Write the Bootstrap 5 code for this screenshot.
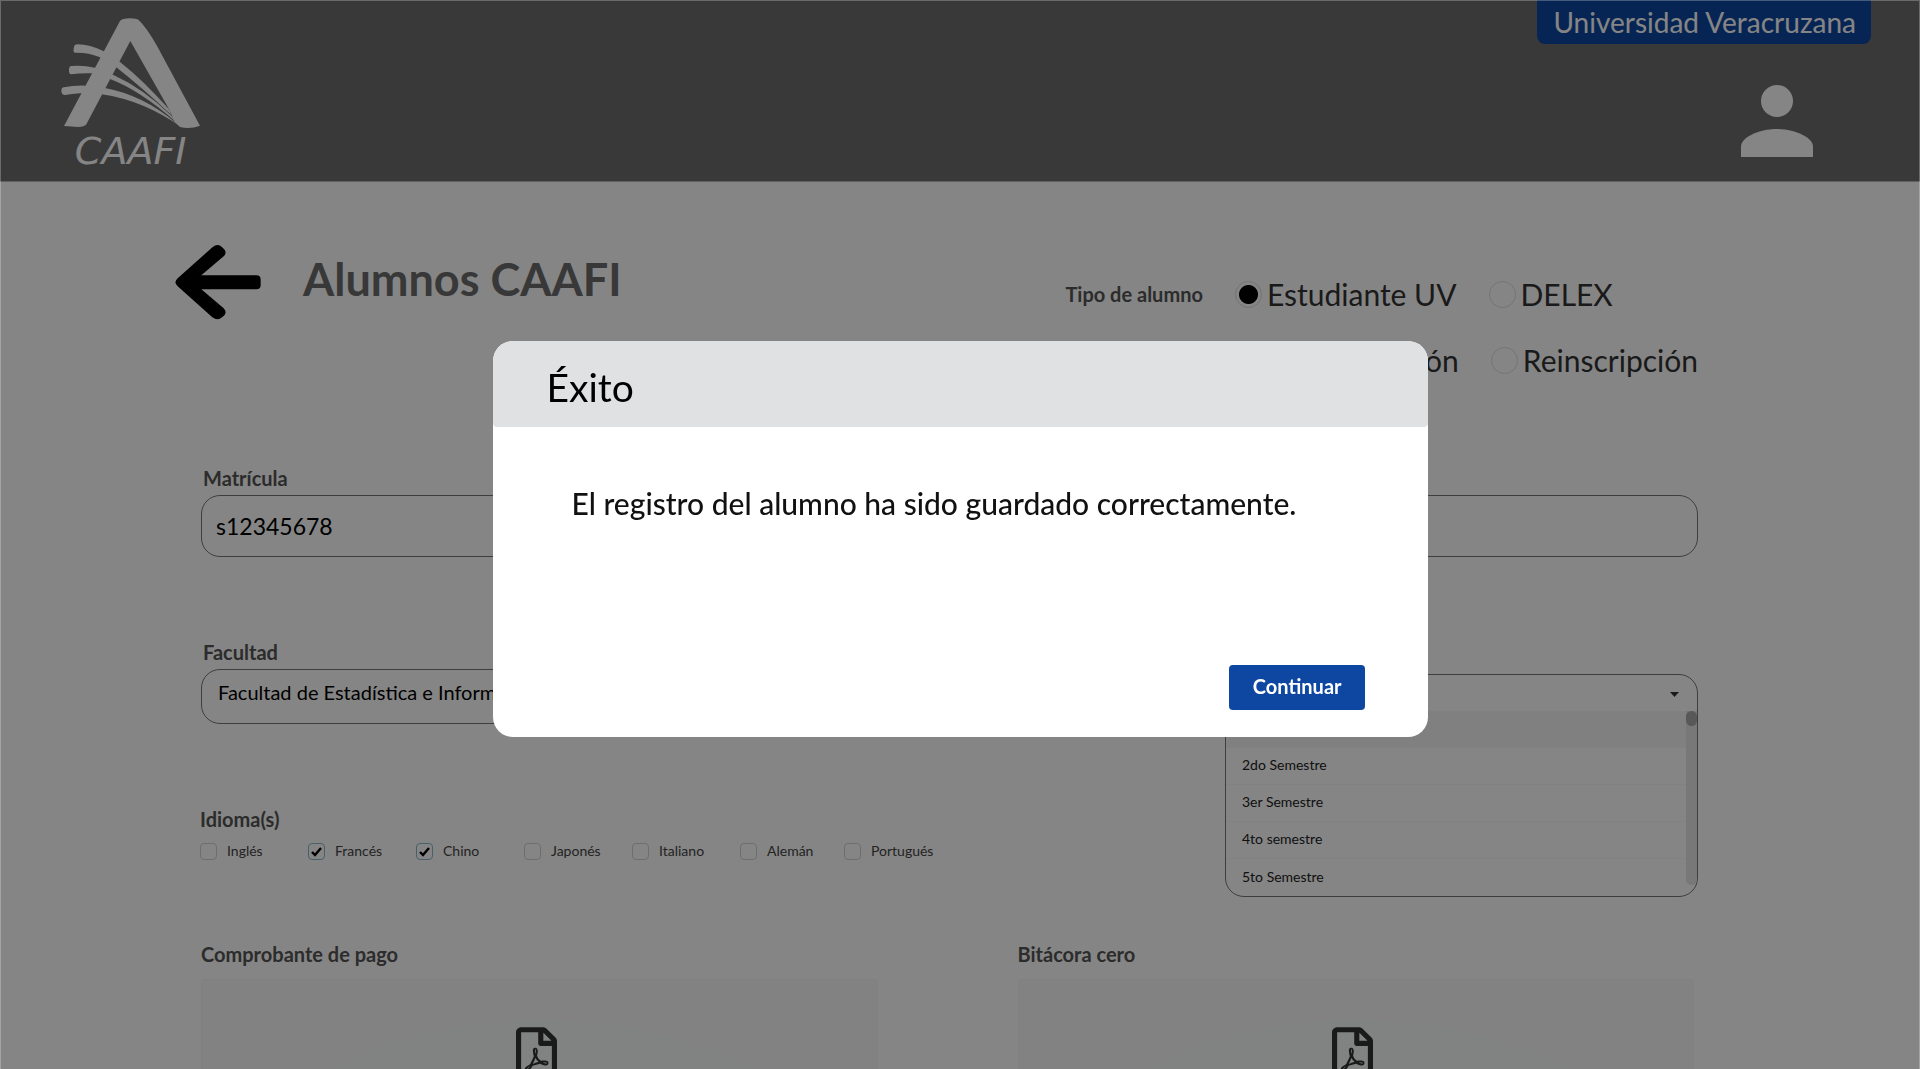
<!DOCTYPE html>
<html lang="es">
<head>
<meta charset="utf-8">
<meta name="viewport" content="width=device-width, initial-scale=1">
<title>Alumnos CAAFI</title>
<link href="https://cdn.jsdelivr.net/npm/bootstrap@5.3.0/dist/css/bootstrap.min.css" rel="stylesheet">
<style>
  body { font-family: Lato, "Open Sans", sans-serif; color: #333; line-height: 1.2; }
  .site-header { background: #6e6e6e; height: 182px; border-bottom: 1px solid #b8b8b8; padding: 0 49px 0 60px; }
  .brand { margin-top: 17px; }
  .brand svg { display: block; width: 142px; height: 160px; }
  .brand text { font: italic 114px "DejaVu Sans", sans-serif; }
  .uni-tag { background: #0d47a1; color: #fff; font-size: 28px; line-height: 44px; border-radius: 0 0 8px 8px; padding: 0 15px 0 16px; }
  .user-btn { margin: 41px 58px 0 0; }
  .user-btn svg, .back-btn svg { display: block; }
  .page-main { padding: 63px 222px 0 201px; }
  .title-row { margin-left: -26px; margin-bottom: 88px; }
  .page-title { font-size: 45px; font-weight: 700; line-height: 68px; color: #6b6b6b; margin: 0 0 0 42px; }
  .type-col { padding-top: 31px; gap: 30px; }
  .type-line { height: 36px; gap: 32px; }
  .type-line label { font-size: 30px; line-height: 36px; }
  .field-label { display: block; font-size: 20px; font-weight: 700; line-height: 24px; color: #555; margin: 0 0 5px 2px; padding: 0; }
  .type-line .field-label { margin: 0; }
  .type-line .wide-label { width: 187px; }
  .radio-dot { appearance: none; width: 27px; height: 27px; margin: 0 5px 0 0; border: 1px solid #dedede; border-radius: 50%; }
  .radio-dot:checked { background: radial-gradient(circle, #000 9px, transparent 10px); }
  .box-field.form-control, .box-field.form-select { border: 1px solid #777; border-radius: 19px; color: #000; background-image: none; }
  .matricula.form-control { height: 62px; font-size: 23px; padding: 0 14px; }
  .facultad.form-select { height: 55px; font-size: 20px; padding: 0 16px 9px; }
  .block-gap { margin-top: 83px; }
  .sem-col { width: 473px; margin-left: 100px; padding-top: 5px; }
  .sem-box { border: 1px solid #777; border-radius: 19px; overflow: hidden; height: 223px; }
  .sem-select.form-select { border: 0; height: 36px; font-size: 14px; padding: 0 14px; background: transparent; border-radius: 0; }
  .caret { width: 9px; height: 5px; background: #333; clip-path: polygon(0 0, 100% 0, 50% 100%); right: 18px; top: 17px; }
  .sem-list { font-size: 14px; }
  .sem-list .list-group-item { height: 37px; line-height: 34px; padding: 0 16px 2px; border: 0; border-bottom: 1px solid #fafafa; color: #222; background: transparent; }
  .sem-list .list-group-item.chosen { background: #f6f6f6; }
  .sem-track { width: 11px; height: 174px; background: #e6e6e6; border-radius: 0 0 6px 6px; }
  .sem-thumb { height: 15px; border-radius: 8px; background: #aaa; }
  .field-label.lang-label { margin: 83px 0 10px -1px; }
  .lang-row { margin-left: -1px; }
  .lang-row label { font-size: 14px; line-height: 20px; width: 108px; color: #444; }
  .lang-row label.narrow { width: 104px; }
  .tick-box { appearance: none; width: 17px; height: 17px; margin: 0 10px 0 0; border: 1px solid #d4d4d4; border-radius: 4px; background: center / 13px no-repeat; }
  .tick-box:checked { border-color: #8ab9c9; background-image: url("data:image/svg+xml,%3Csvg xmlns='http://www.w3.org/2000/svg' viewBox='0 0 13 13'%3E%3Cpath d='M2 7l3 3 6-7' fill='none' stroke='black' stroke-width='2.4'/%3E%3C/svg%3E"); }
  .upload-row { margin-top: 45px; gap: 140px; padding-right: 4px; }
  .upload-row section { flex: 1 1 0; }
  .upload-row .field-label { margin: 0 0 13px; }
  .drop-zone { height: 240px; border: 1px solid #f6f6f6; border-radius: 4px; padding: 47px 6px 0 0; background: radial-gradient(ellipse 300px 170px at 50% 210px, #f7fbfa 99%, #f9f9f9 100%); }
  .shade { position: fixed; inset: 0; background: rgba(0,0,0,.48); border: 1px solid rgba(255,255,255,.25); border-bottom: 0; z-index: 1050; }
  .notice { padding-top: 8px; }
  .notice .modal-dialog { max-width: 935px; }
  .notice .modal-content { border: 0; border-radius: 20px; color: #111; overflow: hidden; }
  .notice .modal-header { background: #e0e1e3; border: 0; border-radius: 20px 20px 4px 4px; padding: 22px 54px 16px; }
  .notice .modal-title { font-size: 39px; line-height: 48px; font-weight: 400; color: #000; }
  .notice .modal-body { padding: 57px 79px 0; min-height: 238px; font-size: 30px; line-height: 38px; font-weight: 500; }
  .notice .modal-footer { border: 0; padding: 0 63px 27px; }
  .continue-btn.btn { background: #0d47a1; color: #fff; font-size: 20px; font-weight: 700; line-height: 24px; border: 0; border-radius: 4px; margin: 0; padding: 9px 23px 12px 24px; }
</style>
</head>
<body class="vh-100 overflow-hidden">
<header class="site-header d-flex justify-content-between align-items-start">
  <a class="brand" href="#" aria-label="CAAFI">
    <svg viewBox="180 50 426 480" fill="#fff">
      <path d="M360 62Q366 54 390 54Q410 54 416 59Q440 82 470 135L600 376Q570 388 540 380L524 365L508 328L391 122L259 372Q252 380 235 380L192 377Z"/>
      <path d="M221 145Q222 132 232 132Q270 133 310 152L360 185Q430 240 507 327L514 344Q430 265 348 200L298 170Q265 156 226 157Q219 157 221 145Z"/>
      <path d="M207 208Q207 197 214 197Q250 194 284 202L342 225Q430 265 515 347L527 364Q420 270 330 236L274 219Q240 218 214 222Q206 220 207 208Z"/>
      <path d="M184 272Q184 262 192 261Q220 255 256 256L318 264Q430 285 528 368L545 381Q430 300 305 282L240 279Q215 281 195 284Q185 284 184 272Z"/>
      <text x="392" y="490" text-anchor="middle">CAAFI</text>
    </svg>
  </a>
  <div class="d-flex flex-column align-items-end">
    <div class="uni-tag">Universidad Veracruzana</div>
    <button class="user-btn btn p-0 border-0" type="button" aria-label="Usuario">
      <svg width="72" height="72" viewBox="723 255 216 216" fill="#fff"><circle cx="831" cy="303" r="48"/><path d="M723 471V440C723 413 775 387 831 387S939 413 939 440V471Z"/></svg>
    </button>
  </div>
</header>

<main class="page-main">
  <div class="title-row d-flex justify-content-between align-items-start">
    <div class="d-flex">
      <button class="back-btn btn p-0 border-0" type="button" aria-label="Regresar">
        <svg width="86" height="75" viewBox="76 74 258 225"><path d="M77 186Q78 180 84 174L188 81Q202 70 213 77L223 86Q233 97 222 108L155 165H320Q333 165 333 178V194Q333 207 320 207H155L222 264Q233 275 223 286L213 294Q202 301 188 291L84 198Q78 192 77 186Z"/></svg>
      </button>
      <h1 class="page-title">Alumnos CAAFI</h1>
    </div>
    <div class="type-col d-flex flex-column">
      <div class="type-line d-flex align-items-center">
        <span class="field-label">Tipo de alumno</span>
        <label class="d-flex align-items-center"><input class="radio-dot" type="radio" name="tipo" checked>Estudiante UV</label>
        <label class="d-flex align-items-center"><input class="radio-dot" type="radio" name="tipo">DELEX</label>
      </div>
      <div class="type-line d-flex align-items-center justify-content-end">
        <span class="field-label wide-label">Tipo de inscripción</span>
        <label class="d-flex align-items-center"><input class="radio-dot" type="radio" name="insc">Inscripción</label>
        <label class="d-flex align-items-center"><input class="radio-dot" type="radio" name="insc">Reinscripción</label>
      </div>
    </div>
  </div>

  <label class="field-label" for="matricula">Matrícula</label>
  <input class="matricula box-field form-control" id="matricula" type="text" value="s12345678">

  <div class="block-gap d-flex align-items-start">
    <div class="flex-grow-1">
      <label class="field-label" for="facultad">Facultad</label>
      <select class="facultad box-field form-select" id="facultad"><option>Facultad de Estadística e Informática</option></select>
      <div class="field-label lang-label">Idioma(s)</div>
      <div class="lang-row d-flex">
        <label class="d-flex align-items-center"><input class="tick-box" type="checkbox">Inglés</label>
        <label class="d-flex align-items-center"><input class="tick-box" type="checkbox" checked>Francés</label>
        <label class="d-flex align-items-center"><input class="tick-box" type="checkbox" checked>Chino</label>
        <label class="d-flex align-items-center"><input class="tick-box" type="checkbox">Japonés</label>
        <label class="d-flex align-items-center"><input class="tick-box" type="checkbox">Italiano</label>
        <label class="d-flex align-items-center narrow"><input class="tick-box" type="checkbox">Alemán</label>
        <label class="d-flex align-items-center"><input class="tick-box" type="checkbox">Portugués</label>
      </div>
    </div>
    <div class="sem-col flex-shrink-0">
      <label class="field-label" for="semestre">Semestre</label>
      <div class="sem-box">
        <div class="position-relative">
          <select class="sem-select form-select" id="semestre"><option>1er Semestre</option></select>
          <span class="caret position-absolute"></span>
        </div>
        <div class="d-flex align-items-start">
          <div class="sem-list list-group list-group-flush flex-grow-1">
            <button type="button" class="list-group-item text-start chosen">1er Semestre</button>
            <button type="button" class="list-group-item text-start">2do Semestre</button>
            <button type="button" class="list-group-item text-start">3er Semestre</button>
            <button type="button" class="list-group-item text-start">4to semestre</button>
            <button type="button" class="list-group-item text-start">5to Semestre</button>
          </div>
          <div class="sem-track"><div class="sem-thumb"></div></div>
        </div>
      </div>
    </div>
  </div>

  <div class="upload-row d-flex">
    <section>
      <h2 class="field-label">Comprobante de pago</h2>
      <div class="drop-zone text-center">
        <svg width="41" height="55" viewBox="0 0 384 512" fill="#333"><path id="pdf" d="M369.900 97.900L286 14C277 5 264.800 0 252.100 0H48C21.500 0 0 21.500 0 48v416c0 26.500 21.500 48 48 48h288c26.500 0 48-21.500 48-48V131.900c0-12.700-5.100-25-14.100-34zM332.100 128H256V51.900l76.100 76.100zM48 464V48h160v104c0 13.300 10.700 24 24 24h104v288H48zm250.200-143.700c-12.200-12-47-8.700-64.400-6.500-17.200-10.500-28.700-25-36.800-46.300 3.900-16.100 10.100-40.600 5.400-56-4.200-26.200-37.800-23.600-42.600-5.900-4.400 16.100-.4 38.500 7 67.100-10 23.900-24.900 56-35.400 74.400-20 10.300-47 26.200-51 46.200-3.300 15.800 26 55.200 76.100-31.200 22.400-7.400 46.800-16.500 68.400-20.100 18.900 10.200 41 17 55.800 17 25.500 0 28-28.200 17.500-38.700zm-198.100 77.800c5.100-13.700 24.500-29.500 30.400-35-19 30.300-30.400 35.700-30.400 35zm81.600-190.600c7.400 0 6.700 32.100 1.800 40.800-4.400-13.900-4.300-40.800-1.800-40.800zm-24.400 136.600c9.700-16.900 18-37 24.700-54.700 8.300 15.100 18.900 27.200 30.100 35.500-20.800 4.300-38.900 13.100-54.800 19.200zm131.600-5s-5 6-37.300-7.800c35.100-2.600 40.900 5.400 37.300 7.800z"/></svg>
      </div>
    </section>
    <section>
      <h2 class="field-label">Bitácora cero</h2>
      <div class="drop-zone text-center">
        <svg width="41" height="55" viewBox="0 0 384 512" fill="#333"><use href="#pdf"/></svg>
      </div>
    </section>
  </div>
</main>

<div class="shade"></div>
<div class="notice modal d-block" tabindex="-1" role="dialog" aria-labelledby="aviso">
  <div class="modal-dialog modal-dialog-centered">
    <div class="modal-content">
      <div class="modal-header"><h2 class="modal-title" id="aviso">Éxito</h2></div>
      <div class="modal-body">El registro del alumno ha sido guardado correctamente.</div>
      <div class="modal-footer"><button type="button" class="continue-btn btn">Continuar</button></div>
    </div>
  </div>
</div>
<script src="https://cdn.jsdelivr.net/npm/bootstrap@5.3.0/dist/js/bootstrap.bundle.min.js"></script>
</body>
</html>
